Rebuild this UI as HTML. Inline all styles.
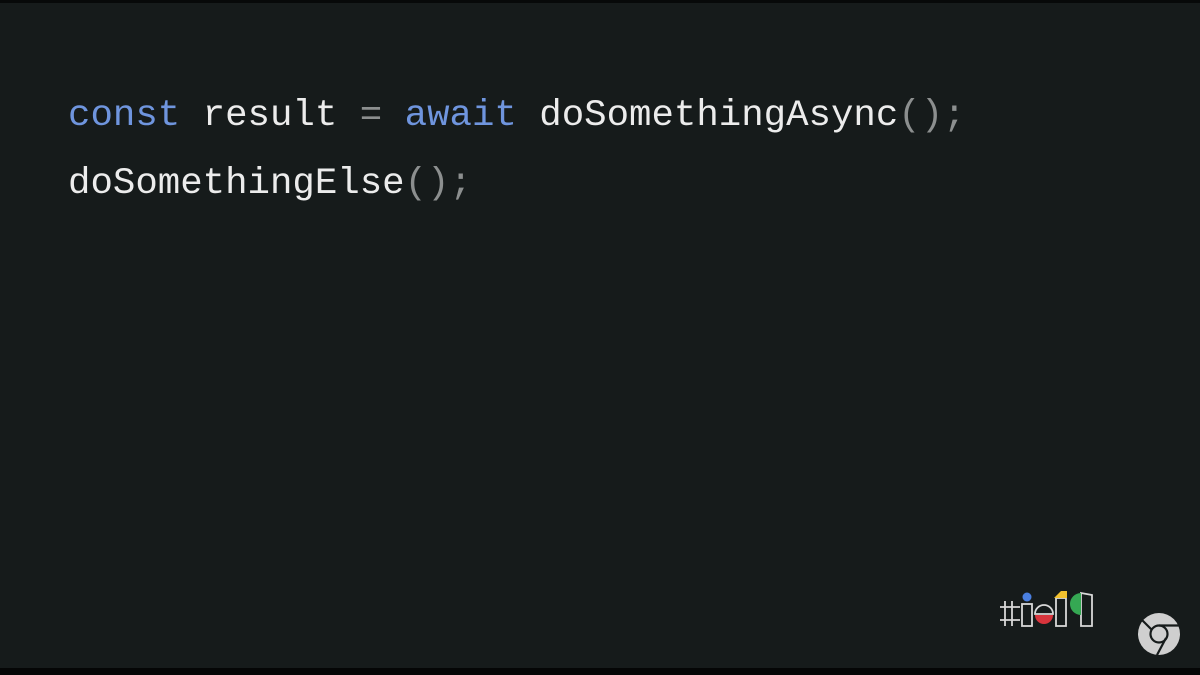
<!DOCTYPE html>
<html><head><style>
html,body{margin:0;padding:0}
body{width:1200px;height:675px;background:#161b1b;position:relative;overflow:hidden;font-family:"Liberation Mono",monospace}
.top{position:absolute;left:0;top:0;width:1200px;height:3px;background:#070909}
.bot{position:absolute;left:0;bottom:0;width:1200px;height:7px;background:#050606}
.line{position:absolute;left:68px;font-size:37.4px;color:#ececec;white-space:pre;line-height:1}
.k{color:#6f95de}.p{color:#8c8f8f}
</style></head><body>
<div class="top"></div>
<div class="line" style="top:98px"><span class="k">const</span> result <span class="p">=</span> <span class="k">await</span> doSomethingAsync<span class="p">();</span></div>
<div class="line" style="top:166px">doSomethingElse<span class="p">();</span></div>
<svg style="position:absolute;left:998px;top:590px" width="100" height="40" viewBox="0 0 100 40">
 <g stroke="#d8d8d8" stroke-width="1.8" fill="none">
  <path d="M7 11V36M14 11V36M2 17H22M2 30H22"/>
  <rect x="24" y="14" width="10" height="22"/>
  <path d="M37 24a9 9 0 0 1 18 0z"/>
  <rect x="58" y="8" width="10" height="28"/>
  <path d="M83 3L94 5V36H83z"/>
 </g>
 <circle cx="29" cy="7" r="4.5" fill="#4a7fe0"/>
 <path d="M37 25h18a9 9 0 0 1 -18 0z" fill="#d8343c"/>
 <path d="M63 1h6v7h-13z" fill="#f2c12e"/>
 <path d="M83 3a11 11 0 0 0 0 22z" fill="#35a853"/>
</svg>
<svg style="position:absolute;left:1137px;top:612px" width="44" height="44" viewBox="0 0 44 44">
 <circle cx="22" cy="22" r="21" fill="#cfcfcf"/>
 <g stroke="#161b1b" stroke-width="2.2" fill="none">
  <circle cx="22" cy="22" r="8.5"/>
  <path d="M22 13.5H42M15 18L5 8M29 26L20 43"/>
 </g>
</svg>
<div class="bot"></div>
</body></html>
